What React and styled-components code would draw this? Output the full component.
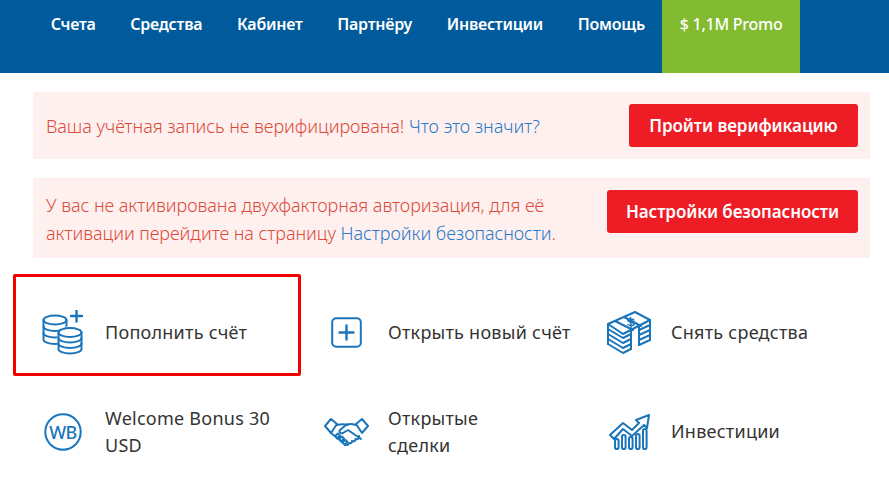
import styled, { createGlobalStyle } from 'styled-components'

const GlobalStyle = createGlobalStyle`
    html, body {
        margin: 0;
        padding: 0;
        background: #ffffff;
        overflow: hidden;
    }
    body {
        font-family: 'Noto Sans', 'Open Sans', sans-serif;
    }
`

const Page = styled.div`
    width: 889px;
    height: 493px;
    overflow: hidden;
`

const Nav = styled.nav`
    display: flex;
    height: 73px;
    padding-left: 33.4px;
    background-color: #005a9b;
`

const NavItem = styled.a`
    display: block;
    padding: 13px 17.4px 0 17.4px;
    color: #ffffff;
    font-size: 16px;
    line-height: 22px;
    font-weight: ${({ $promo }) => ($promo ? 500 : 600)};
    letter-spacing: -0.25px;
    white-space: nowrap;
    background-color: ${({ $promo }) => ($promo ? '#82bb2f' : 'transparent')};
`

const Content = styled.main`
    padding: 19px 19px 0 33px;
`

const Alert = styled.div`
    display: flex;
    align-items: center;
    justify-content: space-between;
    height: ${({ $tall }) => ($tall ? '80px' : '67px')};
    margin-bottom: 19px;
    padding: 12px 12px 12px 13px;
    box-sizing: border-box;
    background-color: #fff0f0;
`

const AlertText = styled.p`
    margin: 0;
    padding-top: 1px;
    color: #dd4b39;
    font-size: 18px;
    line-height: 28px;
    font-weight: 300;
    letter-spacing: -0.05px;
    white-space: nowrap;
    & > a {
        color: #2a7ac7;
    }
`

const AlertButton = styled.button`
    width: ${({ $width }) => $width}px;
    height: 43px;
    border: none;
    border-radius: 3px;
    background-color: #ee1c25;
    color: #ffffff;
    font-family: inherit;
    font-size: 17px;
    font-weight: 600;
    letter-spacing: -0.1px;
    align-self: flex-start;
`

const Tiles = styled.section`
    display: grid;
    grid-template-columns: repeat(3, 283px);
    grid-auto-rows: 99px;
    margin: 25px 0 0 -20px;
`

const Tile = styled.a`
    position: relative;
    display: flex;
    align-items: center;
    color: #333333;
    font-size: 18px;
    line-height: 27px;
    font-weight: 400;
    letter-spacing: 0.25px;
    ${({ $marked }) =>
        $marked &&
        `&::after {
            content: '';
            position: absolute;
            top: -9px;
            left: 0;
            width: 288px;
            height: 102px;
            box-sizing: border-box;
            border: 3px solid #f40000;
            border-radius: 2px;
        }`}
`

const IconBox = styled.span`
    display: flex;
    flex: none;
    align-items: center;
    justify-content: center;
    width: 48px;
    margin: 0 18px 0 26px;
`

const Glyph = styled.svg`
    display: block;
    fill: none;
    stroke: #1a75bb;
    stroke-width: 2;
    stroke-linejoin: round;
    stroke-linecap: round;
`

const BadgeLetters = styled.text`
    fill: #1a75bb;
    stroke: none;
    font-family: 'Noto Sans', sans-serif;
    font-size: 18px;
    font-weight: 500;
    letter-spacing: -0.5px;
`

const Coin = ({ x, y, step }) => (
    <>
        <ellipse cx={x} cy={y} rx="11.5" ry="4.500" />
        <path d={`M${x - 11.5} ${y}v${step * 3}c0 2.500 5 4.500 11.500 4.500s11.500-2 11.500-4.500v-${step * 3}`} />
        <path d={`M${x - 11.5} ${y + step}c0 2.500 5 4.500 11.500 4.500s11.500-2 11.500-4.500`} />
        <path d={`M${x - 11.5} ${y + step * 2}c0 2.500 5 4.500 11.500 4.500s11.500-2 11.500-4.500`} />
    </>
)

const CoinsIcon = () => (
    <Glyph width="42" height="45" viewBox="0 0 42 45">
        <Coin x={13} y={10} step={6.5} />
        <ellipse cx="28" cy="30" rx="13" ry="14" fill="#ffffff" stroke="none" />
        <Coin x={28} y={22.5} step={5.5} />
        <path strokeWidth="2.400" d="M29 6h11M34.500 .500v11" />
    </Glyph>
)

const PlusIcon = () => (
    <Glyph width="31" height="31" viewBox="0 0 31 31">
        <rect x="1.200" y="1.200" width="28.600" height="28.600" rx="4" />
        <path strokeWidth="2.400" d="M8.500 15.500h14M15.500 8.500v14" />
    </Glyph>
)

const MoneyIcon = () => (
    <Glyph width="44" height="44" viewBox="0 0 44 44" strokeWidth="1.800">
        <path d="M1 13 28 1l15 8-27 14z" />
        <path d="M8 10l18 9M17 6l17 9" />
        <path d="M1 13v4M1 18l15 9 8-4M32 19l11-5V9" />
        <path d="M1 23l15 9 8-4M32 24l11-5" />
        <path d="M1 28l15 9 8-4M32 29l11-5" />
        <path d="M1 33l15 9 8-4M32 34l11-5" />
        <path d="M1 18v15M43 14v15M24 20v18M32 15v19" />
        <path strokeWidth="1.500" d="M27 9c-2-1.500-6-1.500-6 .5s6 1.500 6 3.500-4 2-6 .5M23.500 6.500l.5 10" />
    </Glyph>
)

const BonusIcon = () => (
    <Glyph width="38" height="38" viewBox="0 0 38 38">
        <circle cx="19" cy="19" r="17.700" />
        <BadgeLetters x="19" y="25.500" textAnchor="middle">WB</BadgeLetters>
    </Glyph>
)

const HandshakeIcon = () => (
    <Glyph width="45" height="28" viewBox="0 0 45 28" strokeWidth="1.800">
        <path d="M1 8 7 1l6 5-6 9zM44 8l-6-7-6 5 6 9z" />
        <path d="M13 7c4-1 8-1 11 0M32 7c-3-1-7-1.500-10 0l-6 5c-1.500 2 1 4 3 3l5-3 13 9" />
        <path d="M7 15l10 8 4 4c2 1 4-.5 3.500-2 2 1 4-.5 3.500-2 2 1 4-.5 3.500-2 2.500 1 4.500-1 3.500-3" />
        <path d="M11 18l3-2.500 2 2-3 3zM15 21l3-2.500 2 2-3 3zM19 24l2.500-2 2 2-2.500 2" />
    </Glyph>
)

const ChartIcon = () => (
    <Glyph width="41" height="36" viewBox="0 0 41 36" strokeWidth="1.800">
        <path d="M1 21 14 9l9 7L30 9l-3-3 13-5-2 13-3-3-12 11-9-7L5 25z" />
        <rect x="6" y="25" width="3.600" height="10" rx="1.800" />
        <rect x="13" y="21" width="3.600" height="14" rx="1.800" />
        <rect x="20" y="23" width="3.600" height="12" rx="1.800" />
        <rect x="27" y="20" width="3.600" height="15" rx="1.800" />
        <rect x="34" y="15" width="3.600" height="20" rx="1.800" />
    </Glyph>
)

const navItems = ['Счета', 'Средства', 'Кабинет', 'Партнёру', 'Инвестиции', 'Помощь']

const tiles = [
    { title: 'Пополнить счёт', icon: <CoinsIcon />, marked: true },
    { title: 'Открыть новый счёт', icon: <PlusIcon /> },
    { title: 'Снять средства', icon: <MoneyIcon /> },
    { title: <>Welcome Bonus 30<br />USD</>, icon: <BonusIcon /> },
    { title: <>Открытые<br />сделки</>, icon: <HandshakeIcon /> },
    { title: 'Инвестиции', icon: <ChartIcon /> },
]

function App() {
    return (
        <Page>
            <GlobalStyle />
            <Nav>
                {navItems.map((item) => (
                    <NavItem key={item}>{item}</NavItem>
                ))}
                <NavItem $promo>$ 1,1M Promo</NavItem>
            </Nav>
            <Content>
                <Alert>
                    <AlertText>
                        Ваша учётная запись не верифицирована! <a>Что это значит?</a>
                    </AlertText>
                    <AlertButton $width={229}>Пройти верификацию</AlertButton>
                </Alert>
                <Alert $tall>
                    <AlertText>
                        У вас не активирована двухфакторная авторизация, для её
                        <br />
                        активации перейдите на страницу <a>Настройки безопасности</a>.
                    </AlertText>
                    <AlertButton $width={251}>Настройки безопасности</AlertButton>
                </Alert>
                <Tiles>
                    {tiles.map((tile, index) => (
                        <Tile key={`tile-${index}`} $marked={tile.marked}>
                            <IconBox>{tile.icon}</IconBox>
                            <span>{tile.title}</span>
                        </Tile>
                    ))}
                </Tiles>
            </Content>
        </Page>
    )
}

export default App
